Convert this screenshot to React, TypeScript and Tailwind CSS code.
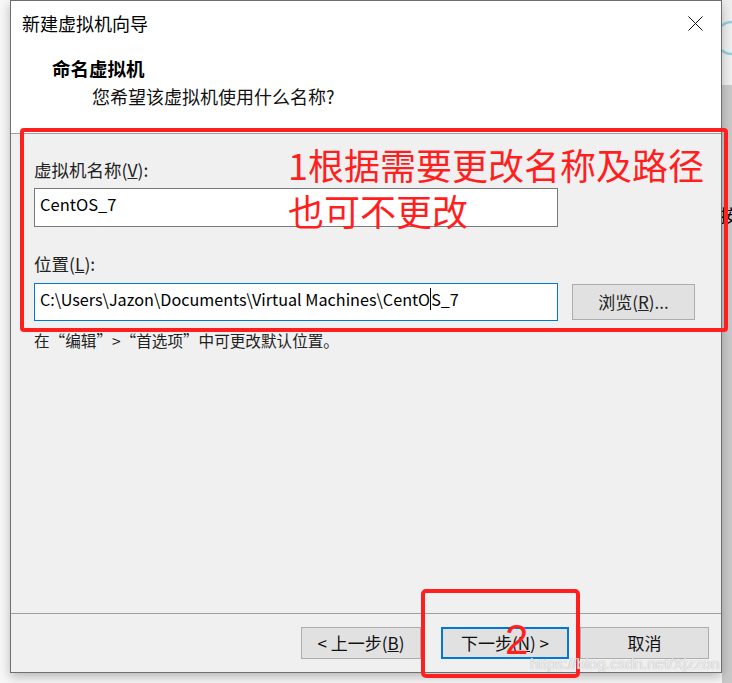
import React from "react";

const cjk = "font-['Segoe_UI','Noto_Sans_CJK_SC','Noto_Sans',sans-serif]";

function CloseIcon() {
  return (
    <svg width="15" height="15" viewBox="0 0 15 15" aria-hidden="true">
      <path d="M0.5 0.5 L14.5 14.5 M14.5 0.5 L0.5 14.5" stroke="#111" strokeWidth="1" />
    </svg>
  );
}

function Button({ children, primary }: { children: React.ReactNode; primary?: boolean }) {
  return (
    <div
      className={
        "flex h-[32px] items-center justify-center bg-[#e1e1e1] text-[17px] text-[#111] " +
        (primary ? "border-2 border-[#0078d7]" : "border border-[#adadad]")
      }
    >
      {children}
    </div>
  );
}

export default function App() {
  return (
    <div className={"relative h-[683px] w-[732px] overflow-hidden bg-[#f7f7f7] " + cjk}>
      {/* window behind, peeking out on the right */}
      <div className="absolute right-0 top-0 h-[683px] w-[10px] bg-[#c9c9c9]">
        <div className="h-[85px] bg-[#efefef]" />
      </div>
      <svg className="absolute left-[722px] top-[20px]" width="10" height="36" aria-hidden="true">
        <path d="M10 2 A16 16 0 0 0 10 34" fill="none" stroke="#8fd0e6" strokeWidth="2.5" />
      </svg>
      <div className="absolute left-[722px] top-[204px] w-[10px] overflow-hidden text-[17px] leading-[22px] text-black">
        <span className="-ml-[2px] block">按</span>
      </div>

      {/* dialog */}
      <div className="relative ml-[10px] flex h-[673px] w-[712px] flex-col border border-[#6f6f6f] shadow-[0_4px_10px_rgba(0,0,0,0.25)]">
        {/* header */}
        <div className="h-[133px] border-b border-[#a0a0a0] bg-white">
          <div className="flex h-[44px] items-center justify-between pl-[11px] pr-[18px]">
            <span className="text-[18px] leading-[24px] text-black">新建虚拟机向导</span>
            <CloseIcon />
          </div>
          <div className="pl-[41px] pt-[11px] text-[18.5px] font-bold leading-[24px] text-black">命名虚拟机</div>
          <div className="pl-[81px] pt-[4px] text-[18px] leading-[24px] text-[#111]">您希望该虚拟机使用什么名称?</div>
        </div>

        {/* body */}
        <div className="flex flex-1 flex-col bg-[#f0f0f0]">
          <div className="flex-1 px-[23px] pt-[24px]">
            <div className="text-[17.5px] leading-[24px] text-[#222]">
              虚拟机名称(<u>V</u>):
            </div>
            <div className="mt-[6px] flex h-[39px] w-[524px] items-start border border-[#7a7a7a] bg-white pl-[5px] pt-[3px] text-[16.5px] leading-[24px] text-black">
              CentOS_7
            </div>
            <div className="mt-[25px] text-[17.5px] leading-[24px] text-[#222]">
              位置(<u>L</u>):
            </div>
            <div className="mt-[7px] flex items-center gap-[14px]">
              <div className="flex h-[38px] w-[524px] items-start border border-[#0078d7] bg-white pl-[5px] pt-[3px] text-[16.2px] leading-[24px] text-black">
                <span className="whitespace-pre">C:\Users\Jazon\Documents\Virtual Machines\CentO</span>
                <span className="mt-[1px] inline-block h-[22px] w-[1px] bg-black" />
                <span>S_7</span>
              </div>
              <div className="flex h-[36px] w-[123px] items-center justify-center border border-[#adadad] bg-[#e1e1e1] text-[17px] text-[#222]">
                浏览(<u>R</u>)...
              </div>
            </div>
            <div className="mt-[7px] text-[15.6px] leading-[24px] text-[#222]">
              在“编辑”&gt;“首选项”中可更改默认位置。
            </div>
          </div>

          {/* footer */}
          <div className="flex h-[59px] justify-end border-t border-[#a0a0a0] pr-[12px] pt-[13px]">
            <div className="w-[120px]">
              <Button>&lt; 上一步(<u>B</u>)</Button>
            </div>
            <div className="ml-[20px] w-[128px]">
              <Button primary>下一步(<u>N</u>) &gt;</Button>
            </div>
            <div className="ml-[11px] w-[129px]">
              <Button>取消</Button>
            </div>
          </div>
        </div>
      </div>

      {/* red annotations */}
      <div className="pointer-events-none absolute left-[20px] top-[128px] h-[204px] w-[708px] rounded-[4px] border-4 border-[#ff1f1f]" />
      <div className="pointer-events-none absolute left-[288px] top-[141px] text-[36px] leading-[46px] text-[#ff1f1f]">
        <div>1根据需要更改名称及路径</div>
        <div>也可不更改</div>
      </div>
      <div className="pointer-events-none absolute left-[421px] top-[589px] h-[89px] w-[159px] rounded-[5px] border-4 border-[#ff1f1f]" />
      <div className="pointer-events-none absolute left-[505px] top-[615px] font-['Liberation_Sans',sans-serif] text-[42px] leading-[50px] text-[#ff1f1f]">
        2
      </div>

      {/* watermark */}
      <div className="pointer-events-none absolute left-[530px] top-[654px] font-['Liberation_Sans',sans-serif] text-[15.5px] leading-[20px] text-white/85 [text-shadow:0_0_1px_#8a8a8a]">
        https://blog.csdn.net/Xjzzon
      </div>
    </div>
  );
}
